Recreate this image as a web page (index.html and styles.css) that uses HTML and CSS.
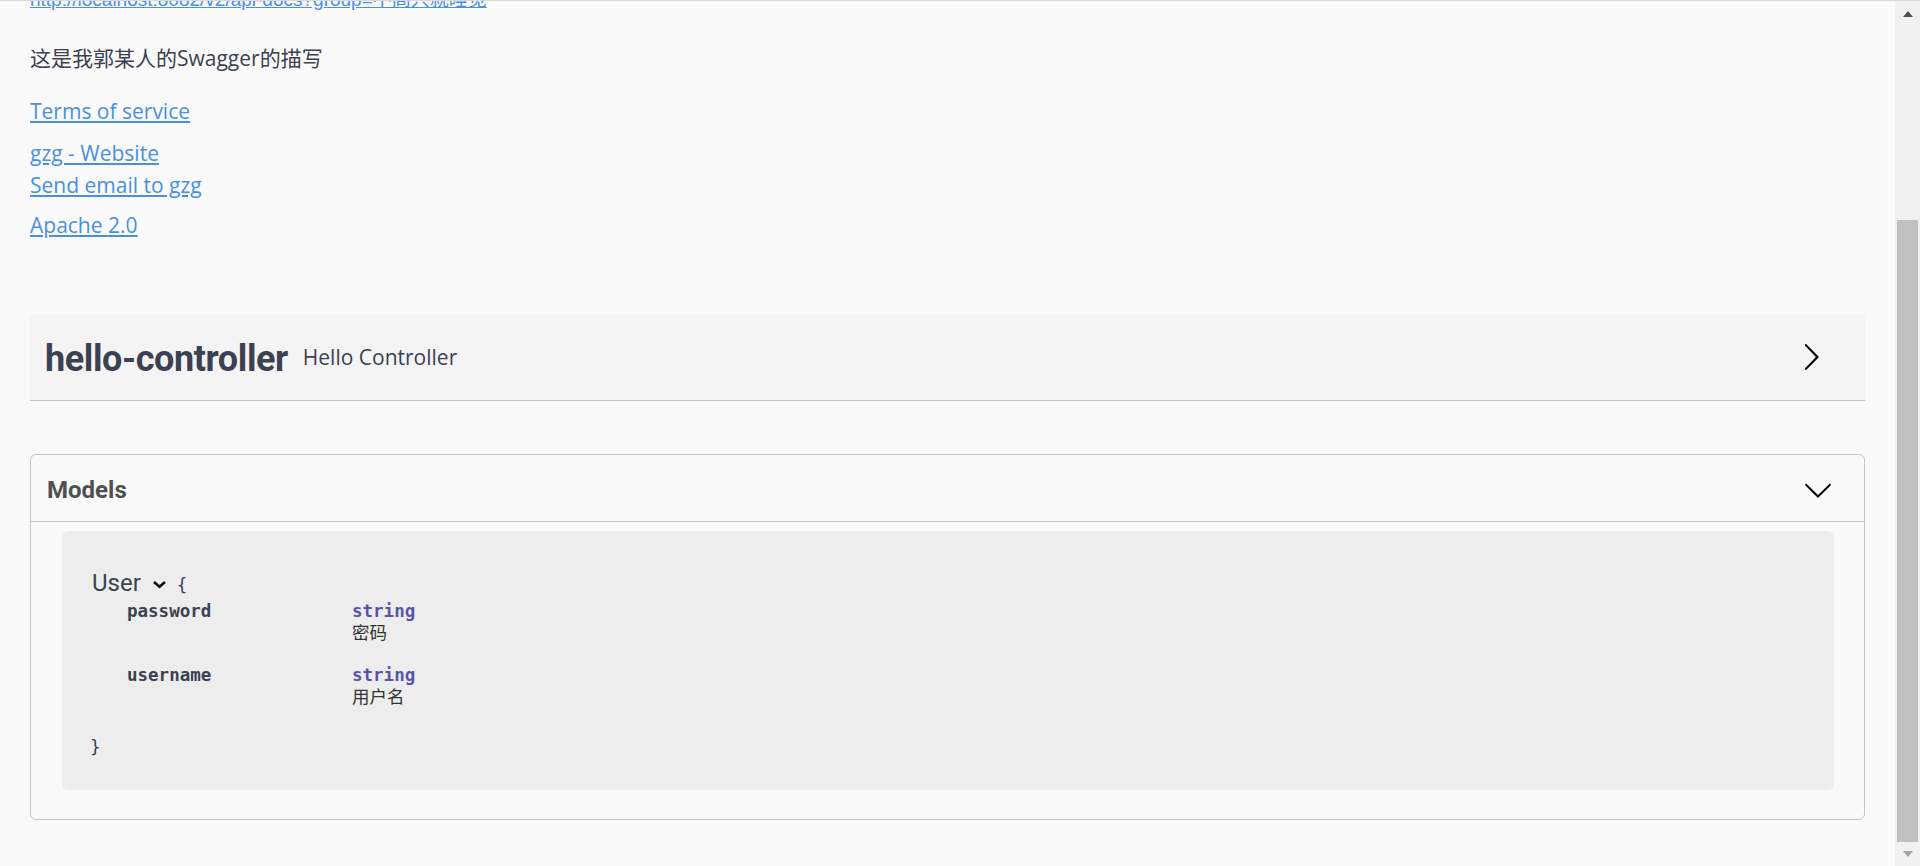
FILE: index.html
```html
<!DOCTYPE html>
<html lang="zh-CN">

<head>
    <meta charset="UTF-8">
    <meta name="viewport" content="width=device-width, initial-scale=1.0">
    <title>Swagger UI</title>
    <link rel="stylesheet" href="styles.css">
</head>

<body>
    <div class="window">
        <div class="viewport">
            <div class="page">
                <div class="info">
                    <a class="url" href="#">http://localhost:8082/v2/api-docs?group=不高兴就睡觉</a>
                    <p class="description">这是我郭某人的Swagger的描写</p>
                    <div class="terms"><a href="#">Terms of service</a></div>
                    <div class="contact">
                        <a href="#">gzg - Website</a><br>
                        <a href="#">Send email to gzg</a>
                    </div>
                    <div class="license"><a href="#">Apache 2.0</a></div>
                </div>

                <div class="tag-section">
                    <h3 class="tag-title">
                        <span class="tag-name">hello-controller</span>
                        <small class="tag-desc">Hello Controller</small>
                        <svg class="tag-arrow" width="30" height="30" viewBox="0 0 20 20">
                            <path d="M13.25 10L6.109 2.58c-.268-.27-.268-.707 0-.979.268-.27.701-.27.969 0l7.83 7.908c.268.271.268.709 0 .979l-7.83 7.908c-.268.271-.701.27-.969 0-.268-.269-.268-.707 0-.979L13.25 10z"/>
                        </svg>
                    </h3>
                </div>

                <section class="models">
                    <h4 class="models-head">
                        <span>Models</span>
                        <svg width="30" height="30" viewBox="0 0 20 20">
                            <path d="M17.418 6.109c.272-.268.709-.268.979 0s.271.701 0 .969l-7.908 7.83c-.27.268-.707.268-.979 0l-7.908-7.83c-.27-.268-.27-.701 0-.969.271-.268.709-.268.979 0L10 13.25l7.418-7.141z"/>
                        </svg>
                    </h4>
                    <div class="model-container">
                        <div class="model-line">
                            <span class="model-title">User</span><svg class="model-toggle" width="15" height="9" viewBox="0 0 15 9"><polyline points="2,2 7.5,6.8 13,2"/></svg><span class="brace">{</span>
                        </div>
                        <div class="prop-row">
                            <div class="prop-name">password</div>
                            <div class="prop-cell">
                                <div class="prop-type">string</div>
                                <div class="prop-desc">密码</div>
                            </div>
                        </div>
                        <div class="prop-row">
                            <div class="prop-name">username</div>
                            <div class="prop-cell">
                                <div class="prop-type">string</div>
                                <div class="prop-desc">用户名</div>
                            </div>
                        </div>
                        <div class="brace-close">}</div>
                    </div>
                </section>
            </div>
        </div>

        <div class="scrollbar">
            <div class="sb-button"><span class="sb-up"></span></div>
            <div class="sb-track"><div class="sb-thumb"></div></div>
            <div class="sb-button down"><span class="sb-down"></span></div>
        </div>
    </div>
</body>

</html>
```

FILE: styles.css
```css
body {
    margin: 0;
    background-color: #fafafa;
    border-top: 1px solid #dadada;
    overflow: hidden;
}

.window {
    display: flex;
    height: 865px;
}

.viewport {
    flex: 1;
    overflow: hidden;
}

.page {
    padding: 0 30px;
}

/* info block */
.info {
    margin-top: -15px;
    font-family: "Open Sans", "Noto Sans CJK SC", sans-serif;
    font-size: 21px;
    line-height: 28px;
    color: #3b4151;
}

.info a {
    color: #4990e2;
}

.url {
    display: block;
    font-family: "Liberation Sans", "Noto Sans CJK SC", sans-serif;
    font-size: 19px;
}

.description {
    margin: 30px 0 0;
}

.terms {
    margin-top: 25px;
}

.contact {
    margin-top: 12px;
    line-height: 32px;
}

.license {
    margin-top: 10px;
}

/* tag section */
.tag-section {
    margin-top: 76px;
}

.tag-title {
    display: flex;
    align-items: center;
    margin: 0;
    padding: 23px 39px 20px 15px;
    background-color: #f4f4f4;
    border-bottom: 1px solid #c3c5c9;
    color: #3b4151;
}

.tag-name {
    font-family: Roboto, sans-serif;
    font-weight: 700;
    font-size: 36px;
    line-height: 42px;
    letter-spacing: -0.4px;
}

.tag-desc {
    flex: 1;
    margin-left: 15px;
    margin-bottom: 4px;
    font-family: "Open Sans", sans-serif;
    font-weight: 400;
    font-size: 21px;
    line-height: 28px;
}

.tag-arrow {
    margin-bottom: 5px;
}

/* models */
.models {
    margin-top: 53px;
    border: 1px solid #c3c5c9;
    border-radius: 6px;
}

.models-head {
    display: flex;
    align-items: center;
    justify-content: space-between;
    box-sizing: border-box;
    height: 67px;
    margin: 0;
    padding: 3px 31px 0 16px;
    border-bottom: 1px solid #c3c5c9;
    font-family: Roboto, sans-serif;
    font-weight: 700;
    font-size: 24px;
    line-height: 28px;
    color: #505050;
}

.model-container {
    margin: 9px 30px 29px 31px;
    padding: 37px 28px 32px;
    background-color: #ededed;
    border-radius: 6px;
    font-family: "DejaVu Sans Mono", "Noto Sans CJK SC", monospace;
    font-size: 17.5px;
    line-height: 22px;
    color: #3b4151;
}

.model-line {
    height: 30px;
    line-height: 30px;
    margin-bottom: 2px;
}

.model-title {
    margin-left: 2px;
    font-family: Roboto, sans-serif;
    font-size: 24px;
}

.model-toggle {
    margin-left: 11px;
    vertical-align: 2px;
}

.model-toggle polyline {
    fill: none;
    stroke: #111;
    stroke-width: 2.6;
}

.brace {
    margin-left: 10px;
    line-height: 1;
}

.prop-row {
    display: flex;
    margin-left: 37px;
    margin-bottom: 20px;
}

.prop-name {
    width: 225px;
    flex-shrink: 0;
    font-weight: 600;
}

.prop-type {
    font-weight: 600;
    color: #5555aa;
}

.prop-desc {
    color: #333;
}

.brace-close {
    margin-top: 28px;
}

/* fake scrollbar, page is scrolled to the bottom */
.scrollbar {
    width: 25px;
    display: flex;
    flex-direction: column;
    background-color: #f1f1f1;
}

.sb-button {
    height: 25px;
    display: flex;
    align-items: center;
    justify-content: center;
}

.sb-button.down {
    height: 24px;
}

.sb-up {
    width: 0;
    height: 0;
    border-style: solid;
    border-width: 0 5.5px 6px;
    border-color: transparent transparent #505050;
}

.sb-down {
    width: 0;
    height: 0;
    border-style: solid;
    border-width: 6px 5.5px 0;
    border-color: #a3a3a3 transparent transparent;
}

.sb-track {
    flex: 1;
}

.sb-thumb {
    margin: 194px 2px 0;
    height: 622px;
    background-color: #c1c1c1;
}
```
